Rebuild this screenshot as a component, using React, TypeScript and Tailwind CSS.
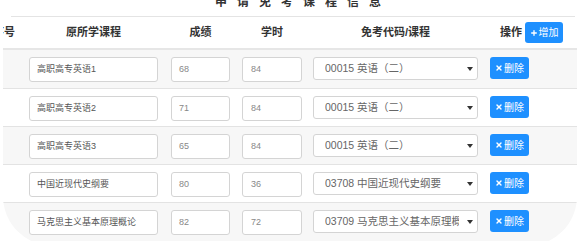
import { X, Plus } from 'lucide-react'

type Row = { course: string; score: string; hours: string; exam: string }

const rows: Row[] = [
  { course: '高职高专英语1', score: '68', hours: '84', exam: '00015 英语（二）' },
  { course: '高职高专英语2', score: '71', hours: '84', exam: '00015 英语（二）' },
  { course: '高职高专英语3', score: '65', hours: '84', exam: '00015 英语（二）' },
  { course: '中国近现代史纲要', score: '80', hours: '36', exam: '03708 中国近现代史纲要' },
  { course: '马克思主义基本原理概论', score: '82', hours: '72', exam: '03709 马克思主义基本原理概论' },
]

const font = "font-['Liberation_Sans','Noto_Sans_CJK_SC',sans-serif]"

export default function App() {
  return (
    <div className={`h-[241px] w-[584px] overflow-hidden bg-white ${font}`}>
      <div className="h-[16px] overflow-hidden">
        <div className="-mt-[4px] pl-[22px] text-center text-[12px] font-bold leading-[12px] tracking-[10px] text-[#333]">
          申请免考课程信息
        </div>
      </div>
      <div className="ml-[11px] mr-[9px] border-t border-[#e4e4e4]" />

      <div className="ml-[3px] w-[574px] overflow-hidden rounded-b-[50px]">
        {/* header */}
        <div className="flex h-[33px] items-center border-b-2 border-[#e6e6e6] text-[11px] font-bold text-[#333]">
          <div className="w-[26px] shrink-0 whitespace-nowrap">
            <span className="-ml-[10px]">序号</span>
          </div>
          <div className="w-[129px] shrink-0 text-center">原所学课程</div>
          <div className="ml-[13px] w-[59px] shrink-0 text-center">成绩</div>
          <div className="ml-[12px] w-[60px] shrink-0 text-center">学时</div>
          <div className="ml-[11px] w-[165px] shrink-0 text-center">免考代码/课程</div>
          <div className="ml-[22px] flex items-center">
            <span>操作</span>
            <button className="ml-[3px] flex h-[21px] w-[38px] items-center justify-center gap-[1px] rounded-[3px] bg-[#1e90ff] text-[10px] font-normal text-white">
              <Plus size={8} strokeWidth={4} />
              增加
            </button>
          </div>
        </div>

        {rows.map((r, i) => (
          <div
            key={i}
            className={`flex items-start pt-[7px] text-[9px] text-[#666] ${
              i % 2 === 0 ? 'bg-[#f7f7f7]' : 'bg-white'
            } ${i === 0 ? 'h-[38px]' : 'border-t border-[#e3e3e3]'} ${
              i === rows.length - 1 ? 'h-[44px]' : i > 0 ? 'h-[38px]' : ''
            }`}
          >
            <div className="w-[26px] shrink-0" />
            <div className="flex h-[25px] w-[129px] shrink-0 items-center rounded-[3px] border border-[#d4d4d4] bg-white pl-[7px] text-[#555]">
              {r.course}
            </div>
            <div className="ml-[13px] flex h-[25px] w-[59px] shrink-0 items-center rounded-[3px] border border-[#d4d4d4] bg-white pl-[7px] text-[#888]">
              {r.score}
            </div>
            <div className="ml-[12px] flex h-[25px] w-[60px] shrink-0 items-center rounded-[3px] border border-[#d4d4d4] bg-white pl-[8px] text-[#888]">
              {r.hours}
            </div>
            <div className="relative ml-[11px] flex h-[23px] w-[165px] shrink-0 items-center overflow-hidden whitespace-nowrap rounded-[3px] border border-[#d4d4d4] bg-white pl-[11px] pr-[18px] text-[10.5px] text-[#666]">
              <span className="overflow-hidden">{r.exam}</span>
              <svg className="absolute right-[4px] top-[9px]" width="6" height="4" viewBox="0 0 6 4">
                <path d="M0 0h6L3 4z" fill="#333" />
              </svg>
            </div>
            <button className="ml-[12px] flex h-[22px] w-[39px] shrink-0 items-center justify-center gap-[1px] rounded-[3px] bg-[#1e90ff] text-[10px] text-white">
              <X size={8} strokeWidth={4} />
              删除
            </button>
          </div>
        ))}
      </div>
    </div>
  )
}
